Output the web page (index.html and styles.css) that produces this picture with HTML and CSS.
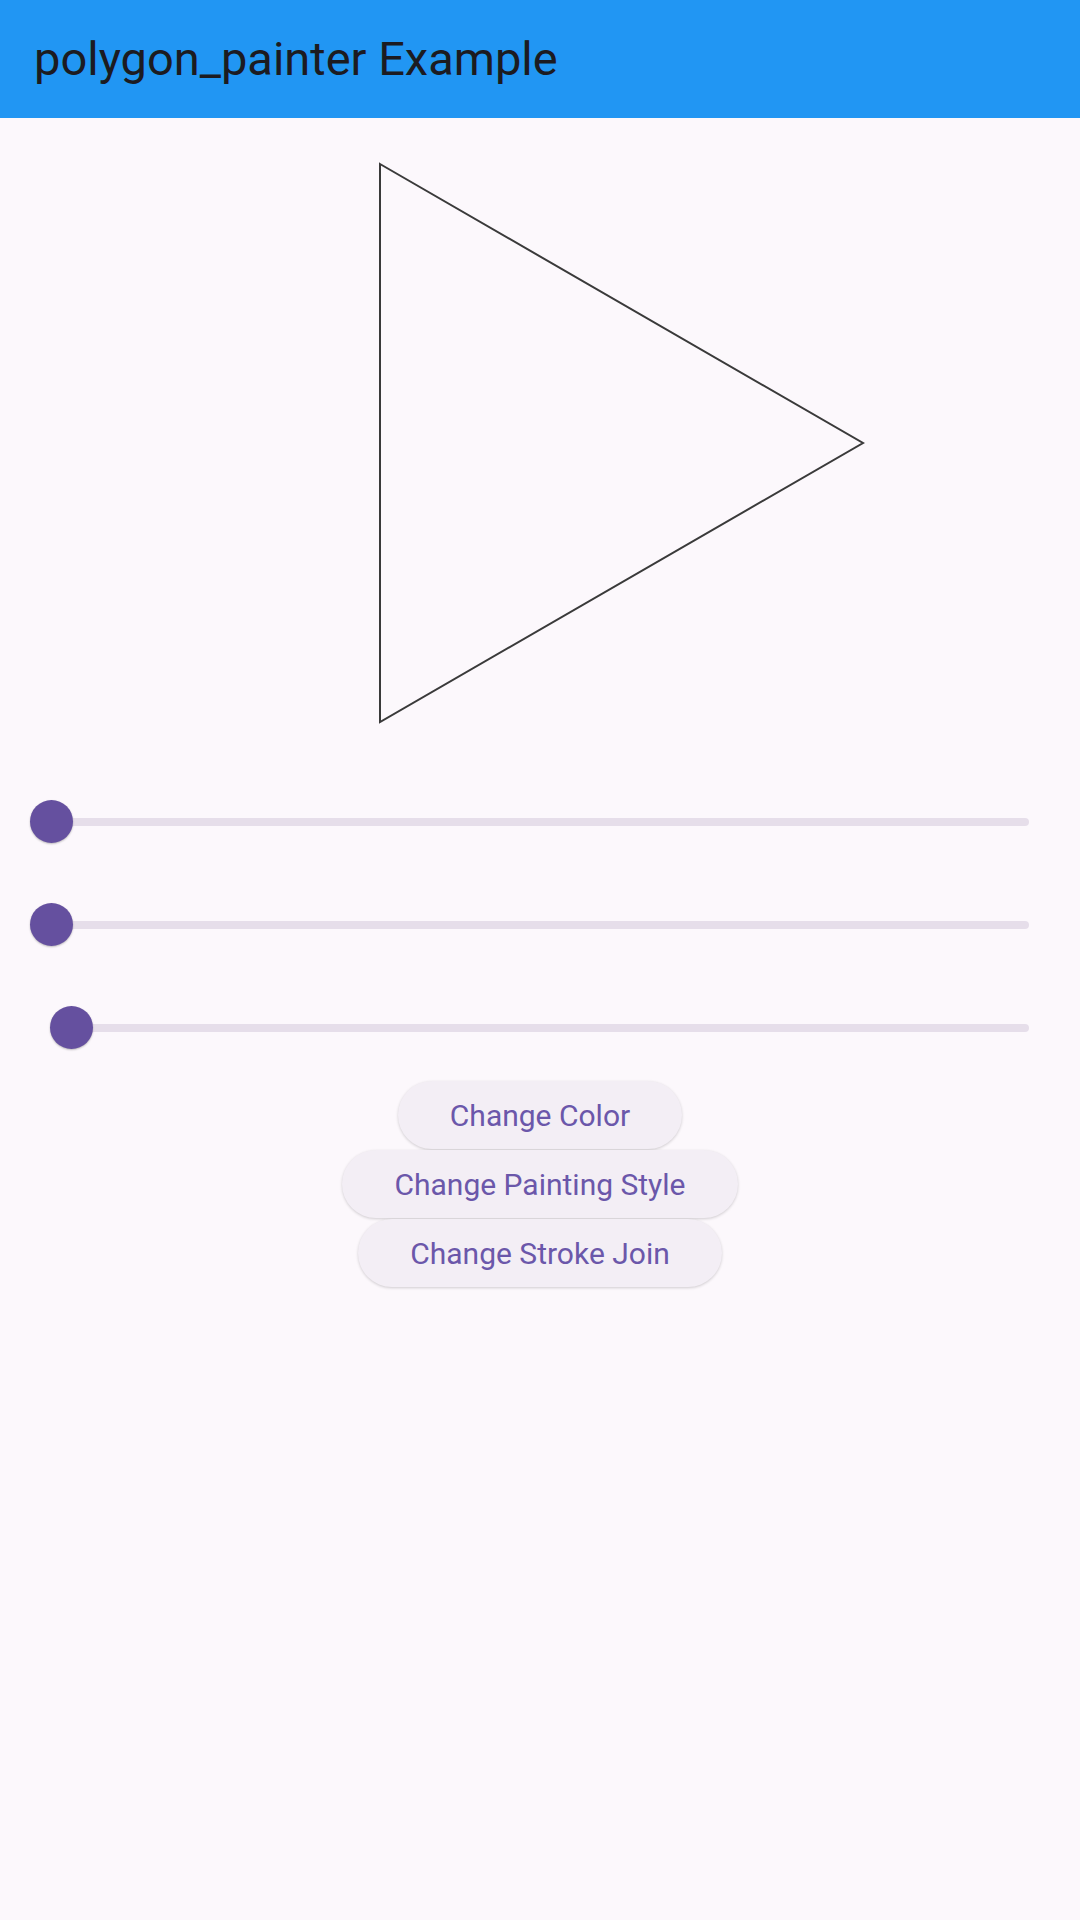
FILE: index.html
```html
<!DOCTYPE html>
<html>
<head>
<meta charset="utf-8">
<link rel="stylesheet" href="styles.css">
</head>
<body>
<header class="appbar"><h1 class="title">polygon_painter Example</h1></header>
<main class="content">
  <div class="canvas">
    <svg width="1080" height="652" viewBox="0 118 1080 652">
      <polygon points="380,164 863,443 380,722" fill="none" stroke="#3a3a3a" stroke-width="2" stroke-linejoin="miter"/>
    </svg>
  </div>
  <div class="sliders">
    <div class="slider"><div class="track"><div class="thumb" style="left:0%"></div></div></div>
    <div class="slider"><div class="track"><div class="thumb" style="left:0%"></div></div></div>
    <div class="slider"><div class="track"><div class="thumb" style="left:2.1%"></div></div></div>
  </div>
  <div class="buttons">
    <button class="btn">Change Color</button>
    <button class="btn">Change Painting Style</button>
    <button class="btn">Change Stroke Join</button>
  </div>
</main>
</body>
</html>
```
FILE: styles.css
```css
html, body {
  margin: 0;
  padding: 0;
}
body {
  width: 1080px;
  height: 1920px;
  background: #fcf8fc;
  font-family: Roboto, "Liberation Sans", sans-serif;
  overflow: hidden;
}
.appbar {
  height: 118px;
  background: #2196f3;
  display: flex;
  align-items: center;
  padding-left: 34px;
  box-sizing: border-box;
}
.title {
  margin: 0;
  font-size: 47px;
  font-weight: 400;
  color: #1c1b21;
  line-height: 1;
  padding-bottom: 2px;
}
.canvas {
  height: 652px;
}
.canvas svg {
  display: block;
}
.sliders {
  display: flex;
  flex-direction: column;
}
.slider {
  height: 103px;
  padding: 0 51px;
  display: flex;
  align-items: center;
}
.track {
  position: relative;
  flex: 1;
  height: 8px;
  border-radius: 4px;
  background: #e6deea;
}
.thumb {
  position: absolute;
  top: 50%;
  width: 43px;
  height: 43px;
  margin-left: -21.5px;
  margin-top: -21.5px;
  border-radius: 50%;
  background: #65509f;
  box-shadow: 0 1px 2px rgba(0,0,0,0.25);
}
.buttons {
  display: flex;
  flex-direction: column;
  align-items: center;
  padding-top: 2px;
}
.btn {
  height: 68px;
  margin-bottom: 1px;
  padding: 0 52px;
  border: none;
  border-radius: 34px;
  background: #f3eef5;
  box-shadow: 0 1px 3px rgba(0,0,0,0.18);
  color: #6b57aa;
  font-family: Roboto, "Liberation Sans", sans-serif;
  font-size: 30px;
  font-weight: 400;
}
```
